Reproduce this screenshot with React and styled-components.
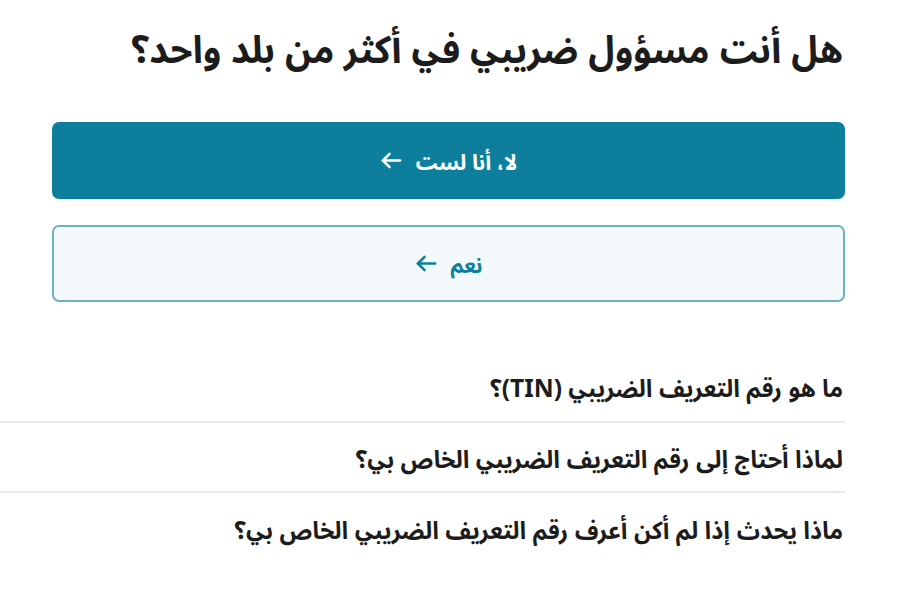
import styled, { createGlobalStyle } from 'styled-components';

const GlobalStyle = createGlobalStyle`
  html, body {
    margin: 0;
    padding: 0;
    background: #ffffff;
  }
  body {
    font-family: "Noto Sans Arabic UI", "Noto Sans Arabic", "DejaVu Sans", sans-serif;
    font-stretch: condensed;
  }
`;

const Page = styled.div`
  direction: rtl;
  width: 900px;
  height: 592px;
  box-sizing: border-box;
  padding: 22px 55px 0 0;
  overflow: hidden;
`;

const Title = styled.h1`
  margin: 0 2px 0 0;
  font-size: 38px;
  font-weight: 700;
  line-height: 52px;
  color: #1c1c1c;
  white-space: nowrap;
`;

const Choices = styled.div`
  display: flex;
  flex-direction: column;
  gap: 26px;
  margin: 48px 0 0 52px;
`;

const Choice = styled.button`
  display: flex;
  align-items: center;
  justify-content: center;
  gap: 13px;
  height: 77px;
  width: 100%;
  box-sizing: border-box;
  border-radius: 7px;
  border: 2px solid ${p => (p.$primary ? '#0d7f9d' : '#6cb2c6')};
  background: ${p => (p.$primary ? '#0d7f9d' : '#f3f8fa')};
  color: ${p => (p.$primary ? '#ffffff' : '#0d7f9d')};
  font-family: inherit;
  font-stretch: inherit;
  font-size: 22px;
  font-weight: 700;
  direction: rtl;
  cursor: pointer;
`;

const Arrow = styled.svg`
  width: 23px;
  height: 23px;
  flex: none;
`;

const Faq = styled.ul`
  list-style: none;
  margin: 51px 0 0 0;
  padding: 0;
`;

const FaqItem = styled.li`
  min-height: 70px;
  box-sizing: border-box;
  padding: 3px 2px 0 0;
  display: flex;
  align-items: center;
  font-size: 24.5px;
  font-weight: 700;
  color: #1c1c1c;
  white-space: nowrap;
  border-bottom: 2px solid #e5e8e9;
  &:last-child {
    border-bottom: none;
  }
`;

function ArrowLeft() {
  return (
    <Arrow viewBox="0 0 24 24" fill="none" stroke="currentColor" strokeWidth="2.6" strokeLinecap="round" strokeLinejoin="round">
      <path d="M21 12H3" />
      <path d="M10 5l-7 7 7 7" />
    </Arrow>
  );
}

const questions = [
  'ما هو رقم التعريف الضريبي (TIN)؟',
  'لماذا أحتاج إلى رقم التعريف الضريبي الخاص بي؟',
  'ماذا يحدث إذا لم أكن أعرف رقم التعريف الضريبي الخاص بي؟',
];

export default function App() {
  return (
    <>
      <GlobalStyle />
      <Page>
        <Title>هل أنت مسؤول ضريبي في أكثر من بلد واحد؟</Title>
        <Choices>
          <Choice $primary>
            <span>لا، أنا لست</span>
            <ArrowLeft />
          </Choice>
          <Choice>
            <span>نعم</span>
            <ArrowLeft />
          </Choice>
        </Choices>
        <Faq>
          {questions.map(q => (
            <FaqItem key={q}>{q}</FaqItem>
          ))}
        </Faq>
      </Page>
    </>
  );
}
